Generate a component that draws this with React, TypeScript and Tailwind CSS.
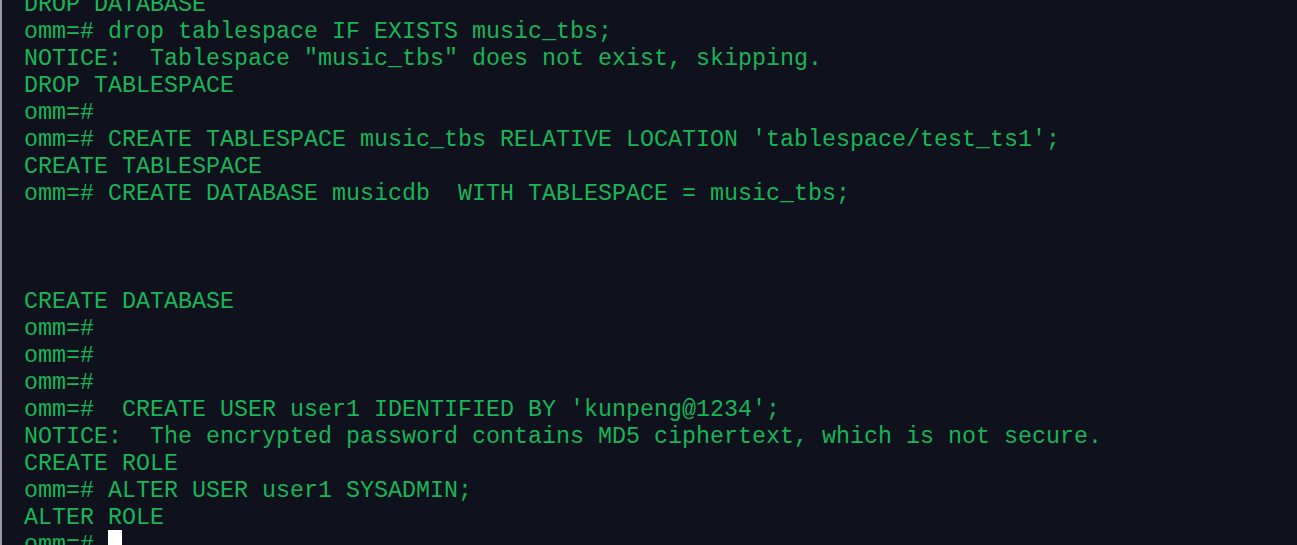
import React from 'react';

// lignes du terminal, dans l'ordre d'affichage
const lines = [
  'DROP DATABASE',
  'omm=# drop tablespace IF EXISTS music_tbs;',
  'NOTICE:  Tablespace "music_tbs" does not exist, skipping.',
  'DROP TABLESPACE',
  'omm=#',
  "omm=# CREATE TABLESPACE music_tbs RELATIVE LOCATION 'tablespace/test_ts1';",
  'CREATE TABLESPACE',
  'omm=# CREATE DATABASE musicdb  WITH TABLESPACE = music_tbs;',
  '',
  '',
  '',
  'CREATE DATABASE',
  'omm=#',
  'omm=#',
  'omm=#',
  "omm=#  CREATE USER user1 IDENTIFIED BY 'kunpeng@1234';",
  'NOTICE:  The encrypted password contains MD5 ciphertext, which is not secure.',
  'CREATE ROLE',
  'omm=# ALTER USER user1 SYSADMIN;',
  'ALTER ROLE',
];

const App = () => {
  return (
    <div className="flex h-[545px] w-[1297px] overflow-hidden bg-[#0f111c]">
      <div className="w-[2px] shrink-0 bg-[#9b9ba1]" />
      <div
        className="mt-[-8px] pl-[22px] text-[23.33px] leading-[27px] text-[#19b458] whitespace-pre"
        style={{ fontFamily: '"Liberation Mono", "Courier New", monospace' }}
      >
        {lines.map((line, i) => (
          <div key={i} className="h-[27px]">
            {line}
          </div>
        ))}
        <div className="flex h-[27px] items-start">
          <span>omm=# </span>
          <span className="mt-[-2px] h-[27px] w-[14px] bg-white" />
        </div>
      </div>
    </div>
  );
};

export default App;
